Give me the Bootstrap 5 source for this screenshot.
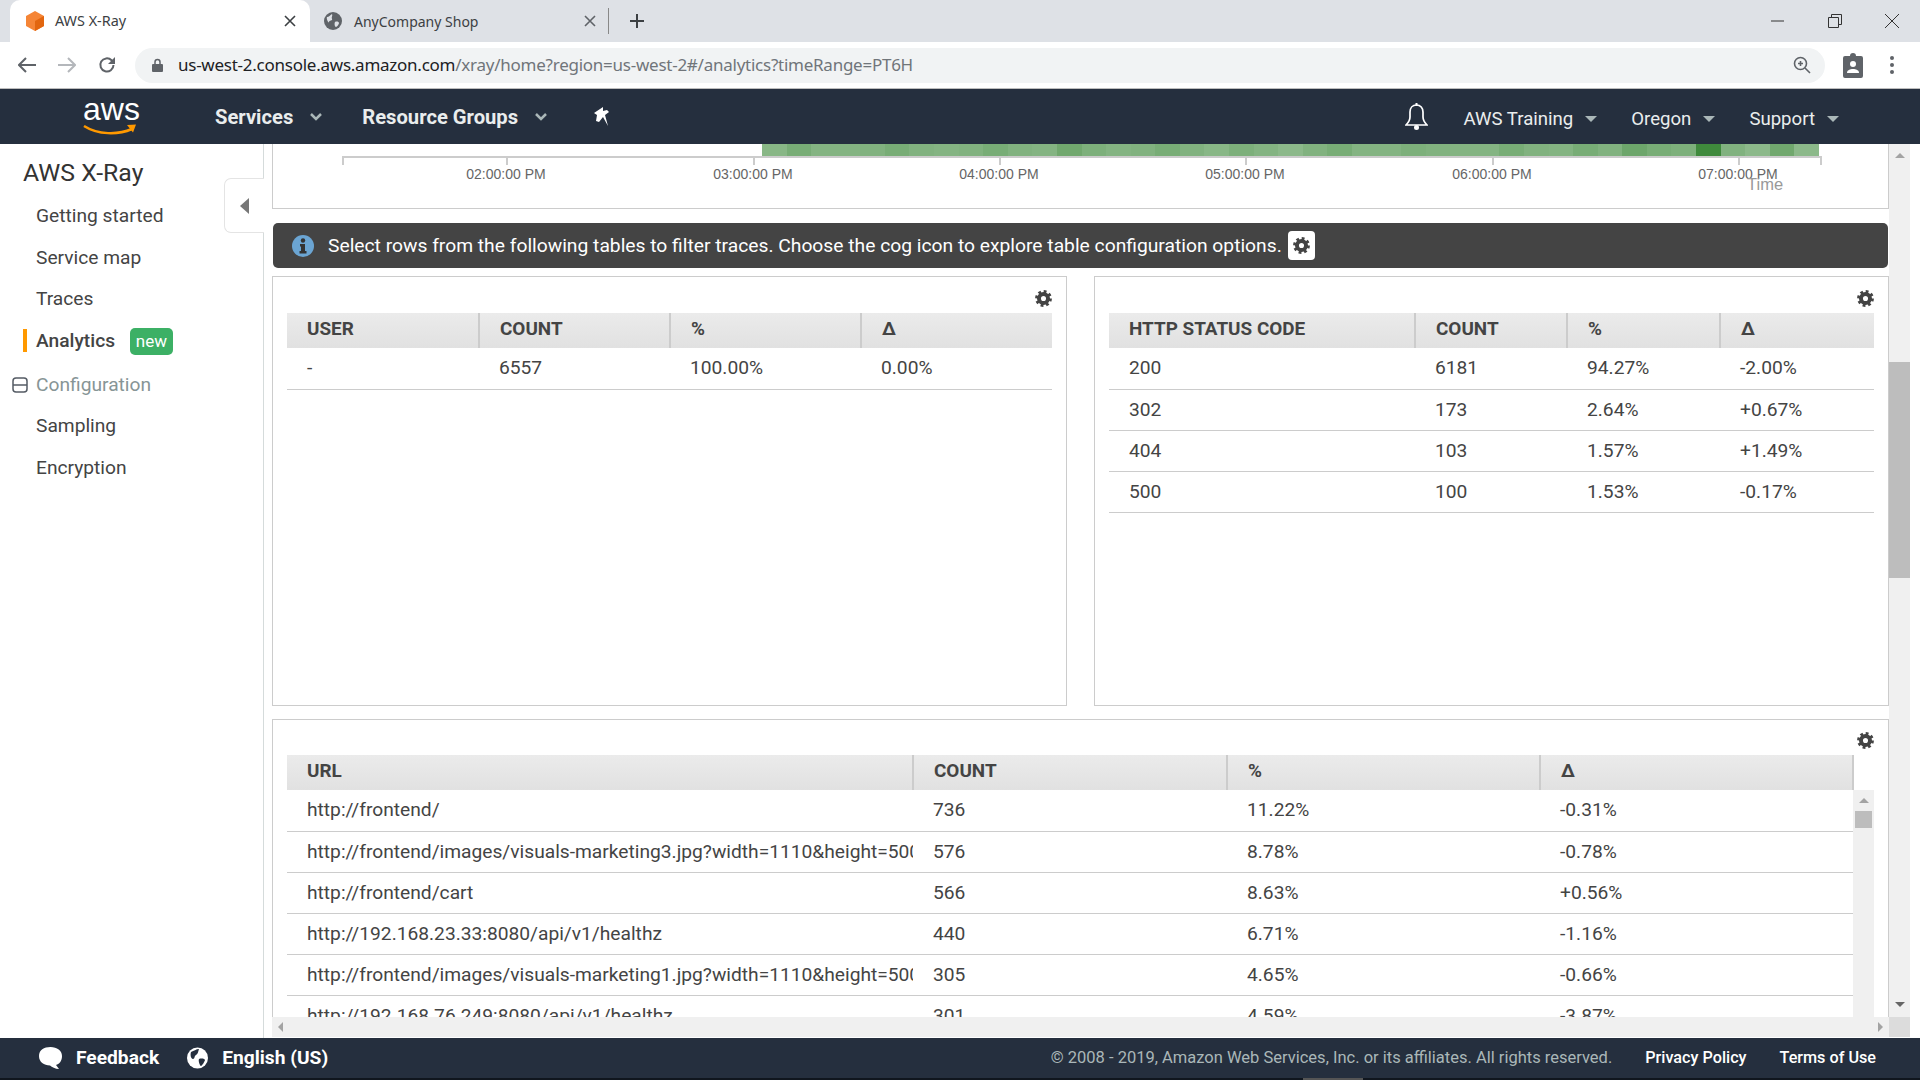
<!DOCTYPE html>
<html lang="en">
<head>
    <meta charset="utf-8">
    <title>AWS X-Ray</title>
    <link href="https://cdn.jsdelivr.net/npm/bootstrap@5.3.0/dist/css/bootstrap.min.css" rel="stylesheet">
    <style>
        html, body { height: 100%; }
        body { width: 1920px; height: 1080px; overflow: hidden; font-family: Roboto, "Liberation Sans", sans-serif; background: #fff; color: #444; }

        /* browser chrome */
        .tab-strip { height: 42px; background: #dee1e6; font-family: "Noto Sans", "Open Sans", sans-serif; font-size: 14.4px; color: #3c4043; padding-left: 10px; }
        .browser-tab { height: 42px; width: 300px; padding: 0 14px; align-self: flex-end; }
        .browser-tab.is-active { background: #fff; border-radius: 10px 10px 0 0; }
        .tab-title { flex: 1 1 auto; margin-left: 9px; }
        .tab-title.is-idle { margin-left: 12px; font-size: 14px; }
        .tab-sep { width: 1px; height: 26px; background: #888; margin-left: -2px; }
        .tab-plus { margin-left: 20px; }
        .win-btns { gap: 41px; padding-right: 20px; }
        .tool-bar { height: 47px; border-bottom: 1px solid #bdbdbd; padding: 0 26px 0 18px; }
        .tool-gap { margin-left: 22px; }
        .badge-gap { margin-left: 18px; }
        .url-box { height: 35px; width: 1690px; margin-left: 19px; border-radius: 18px; background: #f1f3f4; padding: 0 14px 0 17px; font-family: "Noto Sans", "Open Sans", sans-serif; font-size: 17px; color: #202124; }
        .url-box .url-rest { color: #70757a; }
        .url-text { margin-left: 15px; flex: 1 1 auto; letter-spacing: -.25px; }

        /* console header */
        .top-nav { height: 55px; background: #252f3e; color: #fff; padding-left: 83px; padding-right: 81px; }
        .aws-logo { width: 56px; height: 40px; margin-right: 76px; position: relative; line-height: 1; }
        .aws-word { font-family: "Liberation Sans", sans-serif; font-size: 32px; display: block; text-align: center; margin-top: -3px; line-height: 30px; }
        .nav-main { font-size: 20.2px; font-weight: 700; color: #eaeded; padding-top: 2px; }
        .nav-side { font-size: 18.6px; color: #eaeded; padding-top: 6px; }
        .caret-gray { display: inline-block; width: 0; height: 0; border-left: 6px solid transparent; border-right: 6px solid transparent; border-top: 6px solid #aab7b8; margin-left: 12px; margin-top: 4px; }
        .caret-gray.has-gap { margin-right: 34px; }
        .chev-one { margin-left: 16px; margin-right: 39px; }
        .chev-two { margin-left: 16px; margin-right: 43px; }
        .bell-gap { margin-right: 36px; }

        /* middle area */
        .middle { height: 894px; position: relative; }
        .side-menu { width: 264px; border-right: 1px solid #d5dbdb; padding: 14px 0 0 36px; flex: 0 0 auto; }
        .side-title { font-size: 24.8px; color: #333; margin: 0 0 0 -13px; line-height: 29px; height: 37px; }
        .side-link { font-size: 19.2px; height: 41.7px; line-height: 41.7px; color: #444; position: relative; }
        .side-link.is-current { font-weight: 500; }
        .side-link.is-current::before { content: ""; position: absolute; left: -13px; top: 9px; width: 4px; height: 23px; background: #f90; }
        .side-link.is-group { color: #879596; margin-top: 2px; }
        .new-tag { background: #3cb065; color: #fff; font-size: 17px; font-weight: 400; border-radius: 5px; padding: 3px 6px; line-height: 21px; margin-left: 10px; display: inline-block; }
        .group-icon { position: absolute; left: -24px; top: 13px; }
        .collapse-tab { position: absolute; left: 224px; top: 34px; width: 40px; height: 55px; background: #fff; border: 1px solid #e4e4e4; border-right: 0; border-radius: 7px 0 0 7px; }
        .tri-left { width: 0; height: 0; border-top: 8px solid transparent; border-bottom: 8px solid transparent; border-right: 9px solid #777; }

        .work-col { width: 1646px; flex: 0 0 auto; }
        .work-view { width: 1646px; height: 873px; overflow: hidden; }
        .scroll-area { width: 1625px; padding-left: 8px; flex: 0 0 auto; overflow: hidden; }
        .pane { border: 1px solid #ccc; background: #fff; }
        .chart-pane { height: 65px; border-top: 0; position: relative; }
        .heat-bar { position: absolute; left: 489px; top: 0; width: 1057px; height: 12px; }
        .heat-cell { flex: 1 1 0; background: #3f8a3c; }
        .axis-line { position: absolute; left: 69px; top: 12px; width: 1479px; height: 2px; background: #ccc; }
        .axis-tick { position: absolute; top: 12px; width: 2px; height: 9px; background: #ccc; }
        .axis-label { position: absolute; top: 21px; width: 100px; margin-left: -50px; text-align: center; font: 14px "Liberation Sans", sans-serif; color: #666; line-height: 18px; }
        .axis-name { position: absolute; left: 1474px; top: 31px; font: 16.5px "Liberation Sans", sans-serif; color: #999; line-height: 18px; }
        .info-banner { height: 45px; margin-top: 14px; background: #444; border-radius: 5px; color: #fff; font-size: 19.25px; padding-left: 19px; margin-right: 1px; margin-left: 1px; }
        .info-banner .info-text { margin-left: 14px; margin-right: 6px; padding-top: 2px; }
        .cog-chip { width: 27px; height: 29px; background: #fff; border-radius: 4px; color: #444; }
        .pane-pair { margin-top: 8px; gap: 27px; }
        .half-pane { width: 795px; height: 430px; padding: 0 14px; }
        .wide-pane { margin-top: 13px; height: 320px; padding: 0 14px; }
        .cog-row { height: 36px; padding-top: 13px; color: #444; line-height: 0; }
        .wide-pane .cog-row { height: 35px; padding-top: 12px; }

        .data-grid { table-layout: fixed; margin: 0; width: 100%; border-collapse: collapse; }
        .data-grid th { background: linear-gradient(#ebebeb, #e1e1e1); border: 0; border-right: 2px solid #ccc; font-size: 18.9px; font-weight: 700; color: #444; padding: 0 0 4px 20px; height: 35px; line-height: 30px; vertical-align: middle; box-shadow: none; }
        .data-grid th:last-child { border-right: 0; }
        .data-grid.has-edge th:last-child { border-right: 2px solid #ccc; }
        .data-grid td { font-size: 19.2px; color: #444; padding: 0 0 0 20px; height: 41px; line-height: 40px; border: 0; border-bottom: 1px solid #ccc; white-space: nowrap; overflow: hidden; box-shadow: none; }
        .col-user { width: 192px; }
        .col-num { width: 191px; }
        .col-code { width: 306px; }
        .col-mid { width: 152px; }
        .col-pct { width: 153px; }
        .col-url { width: 626px; }
        .col-cnt { width: 314px; }
        .col-share { width: 313px; }
        .head-wrap { width: 1567px; }
        .body-wrap { width: 1566px; flex: 0 0 auto; }
        .grid-scroll { width: 21px; flex: 0 0 auto; background: #f0f0f0; height: 240px; position: relative; }
        .grid-thumb { position: absolute; left: 2px; top: 21px; width: 17px; height: 17px; background: #bdbdbd; }
        .tri-up { width: 0; height: 0; border-left: 5px solid transparent; border-right: 5px solid transparent; border-bottom: 5px solid #a3a3a3; }
        .tri-down { width: 0; height: 0; border-left: 5px solid transparent; border-right: 5px solid transparent; border-top: 5px solid #666; }
        .tri-side-l { width: 0; height: 0; border-top: 5px solid transparent; border-bottom: 5px solid transparent; border-right: 5px solid #a3a3a3; }
        .tri-side-r { width: 0; height: 0; border-top: 5px solid transparent; border-bottom: 5px solid transparent; border-left: 5px solid #a3a3a3; }

        .page-scroll { width: 21px; flex: 0 0 auto; height: 873px; background: #f0f0f0; position: relative; padding: 9px 0 10px; }
        .page-thumb { position: absolute; left: 0; top: 218px; width: 21px; height: 216px; background: #bdbdbd; }
        .h-scroll { width: 1617px; margin-left: 8px; height: 20px; background: #f0f0f0; padding: 0 6px; }
        .h-corner { width: 21px; height: 20px; background: #dcdcdc; }

        /* footer */
        .foot-bar { height: 40px; background: #252f3e; color: #fff; padding: 0 44px 0 39px; font-size: 19.2px; }
        .foot-item { font-weight: 700; margin-left: 14px; padding-top: 1px; }
        .foot-globe { margin-left: 28px; }
        .foot-copy { color: #aab7b8; font-size: 16.5px; font-weight: 400; padding-top: 1px; }
        .foot-link { font-size: 16.2px; font-weight: 500; color: #fff; margin-left: 33px; padding-top: 1px; }
        .foot-edge { height: 2px; background: #10161e; position: relative; }
        .edge-mark { position: absolute; left: 1303px; top: 0; width: 60px; height: 2px; background: #555; }
    </style>
</head>
<body class="d-flex flex-column">

<svg width="0" height="0" class="d-block position-absolute">
    <symbol id="cog" viewBox="0 0 18 18">
        <circle cx="9" cy="9" r="4.8" fill="none" stroke="currentColor" stroke-width="4.2"/>
        <circle cx="9" cy="9" r="7.3" fill="none" stroke="currentColor" stroke-width="3.2" stroke-dasharray="2.9 2.83"/>
    </symbol>
</svg>

<div class="tab-strip d-flex align-items-center flex-shrink-0">
    <div class="browser-tab is-active d-flex align-items-center">
        <svg width="22" height="22" viewBox="0 0 22 22"><path d="M11 1l9 5v10l-9 5-9-5V6z" fill="#f58536"/><path d="M11 11l9-5v10l-9 5z" fill="#e2660f"/></svg>
        <span class="tab-title">AWS X-Ray</span>
        <svg width="12" height="12" viewBox="0 0 12 12"><path d="M1 1l10 10M11 1L1 11" stroke="#3c4043" stroke-width="1.6"/></svg>
    </div>
    <div class="browser-tab d-flex align-items-center">
        <svg width="18" height="18" viewBox="0 0 18 18"><circle cx="9" cy="9" r="9" fill="#5f6368"/><path d="M3 5c2 0 3-2 5-3 1 2-1 3 0 5s-3 1-3 3-3-3-2-5zM11 10c2-1 4 0 4 1s-2 4-3 4-2-3-1-5z" fill="#dee1e6"/></svg>
        <span class="tab-title is-idle">AnyCompany Shop</span>
        <svg width="12" height="12" viewBox="0 0 12 12"><path d="M1 1l10 10M11 1L1 11" stroke="#5f6368" stroke-width="1.6"/></svg>
    </div>
    <div class="tab-sep"></div>
    <svg class="tab-plus" width="16" height="16" viewBox="0 0 16 16"><path d="M8 1v14M1 8h14" stroke="#3c4043" stroke-width="2"/></svg>
    <div class="win-btns d-flex align-items-center ms-auto">
        <svg width="16" height="16" viewBox="0 0 16 16"><path d="M1 8h13" stroke="#333" stroke-width="1"/></svg>
        <svg width="16" height="16" viewBox="0 0 16 16"><path d="M1.5 4.5h10v10h-10zM4.5 4.5v-3h10v10h-3" fill="none" stroke="#333"/></svg>
        <svg width="16" height="16" viewBox="0 0 16 16"><path d="M1 1l14 14M15 1L1 15" stroke="#333"/></svg>
    </div>
</div>

<div class="tool-bar d-flex align-items-center flex-shrink-0">
    <svg width="18" height="16" viewBox="0 0 18 16"><path d="M8 1L1 8l7 7M1 8h17" fill="none" stroke="#5f6368" stroke-width="2"/></svg>
    <svg class="tool-gap" width="18" height="16" viewBox="0 0 18 16"><path d="M10 1l7 7-7 7M17 8H0" fill="none" stroke="#b4b7bb" stroke-width="2"/></svg>
    <svg class="tool-gap" width="18" height="18" viewBox="0 0 18 18"><path d="M15.5 9A6.6 6.6 0 1 1 13.6 4.3L16 6.6" fill="none" stroke="#5f6368" stroke-width="2"/><path d="M17 1v7h-7z" fill="#5f6368"/></svg>
    <div class="url-box d-flex align-items-center">
        <svg width="11" height="14" viewBox="0 0 11 14"><path d="M1 6h9a1 1 0 0 1 1 1v6a1 1 0 0 1-1 1H1a1 1 0 0 1-1-1V7a1 1 0 0 1 1-1z" fill="#5f6368"/><path d="M3 6V4a2.500 2.500 0 0 1 5 0v2" fill="none" stroke="#5f6368" stroke-width="1.500"/></svg>
        <span class="url-text">us-west-2.console.aws.amazon.com<span class="url-rest">/xray/home?region=us-west-2#/analytics?timeRange=PT6H</span></span>
        <svg width="18" height="18" viewBox="0 0 18 18"><circle cx="7.500" cy="7.500" r="6" fill="none" stroke="#5f6368" stroke-width="1.600"/><path d="M12 12l5 5M7.500 5v5M5 7.500h5" stroke="#5f6368" stroke-width="1.600"/></svg>
    </div>
    <svg class="badge-gap" width="20" height="25" viewBox="0 0 20 25"><path d="M2 3h5a3 3 0 0 1 6 0h5a2 2 0 0 1 2 2v18a2 2 0 0 1-2 2H2a2 2 0 0 1-2-2V5a2 2 0 0 1 2-2z" fill="#5f6368"/><circle cx="10" cy="11" r="3" fill="#fff"/><path d="M4 20c0-3 3-4 6-4s6 1 6 4z" fill="#fff"/></svg>
    <svg class="ms-auto" width="4" height="18" viewBox="0 0 4 18"><circle cx="2" cy="2" r="2" fill="#5f6368"/><circle cx="2" cy="9" r="2" fill="#5f6368"/><circle cx="2" cy="16" r="2" fill="#5f6368"/></svg>
</div>

<nav class="top-nav d-flex align-items-center flex-shrink-0">
    <div class="aws-logo">
        <span class="aws-word">aws</span>
        <svg class="d-block" width="56" height="12" viewBox="0 0 56 12"><path d="M1 2c14 9 34 9 48 3" fill="none" stroke="#f90" stroke-width="2.500"/><path d="M44 1l9-.5-3 8z" fill="#f90"/></svg>
    </div>
    <span class="nav-main">Services</span>
    <svg class="chev-one" width="14" height="8" viewBox="0 0 14 8"><path d="M2 1l5 5 5-5" fill="none" stroke="#aab7b8" stroke-width="2.500"/></svg>
    <span class="nav-main">Resource Groups</span>
    <svg class="chev-two" width="14" height="8" viewBox="0 0 14 8"><path d="M2 1l5 5 5-5" fill="none" stroke="#aab7b8" stroke-width="2.500"/></svg>
    <svg width="18" height="20" viewBox="0 0 18 20"><path transform="matrix(-1 0 0 1 18 0)" d="M6 0l9 6-3 2 1 6-3 1-4-5-5 9 3-11-4-3 2-2 4 1z" fill="#fff"/></svg>
    <svg class="ms-auto bell-gap" width="23" height="28" viewBox="0 0 23 28"><path d="M11.500 2c-4 0-6.500 3-6.500 7v5c0 3-2 6-4 8h21c-2-2-4-5-4-8V9c0-4-2.500-7-6.500-7z" fill="none" stroke="#fff" stroke-width="1.700"/><circle cx="11.500" cy="24.500" r="2.500" fill="#fff"/><rect x="10.500" y="0" width="2" height="3" fill="#fff"/></svg>
    <span class="nav-side">AWS Training</span>
    <span class="caret-gray has-gap"></span>
    <span class="nav-side">Oregon</span>
    <span class="caret-gray has-gap"></span>
    <span class="nav-side">Support</span>
    <span class="caret-gray"></span>
</nav>

<div class="middle d-flex flex-shrink-0">
    <aside class="side-menu">
        <h1 class="side-title fw-normal">AWS X-Ray</h1>
        <div class="side-link">Getting started</div>
        <div class="side-link">Service map</div>
        <div class="side-link">Traces</div>
        <div class="side-link is-current">Analytics <span class="new-tag">new</span></div>
        <div class="side-link is-group">
            <svg class="group-icon" width="16" height="16" viewBox="0 0 16 16"><rect x="1" y="1" width="14" height="14" rx="3" fill="none" stroke="#545b64" stroke-width="1.500"/><path d="M1 8h14" stroke="#545b64" stroke-width="1.500"/></svg>
            Configuration
        </div>
        <div class="side-link">Sampling</div>
        <div class="side-link">Encryption</div>
    </aside>
    <div class="collapse-tab d-flex align-items-center justify-content-center"><div class="tri-left"></div></div>

    <div class="work-col">
        <div class="work-view d-flex">
            <div class="scroll-area">
                <div class="pane chart-pane">
                    <div class="axis-line"></div>
                    <div class="heat-bar d-flex" id="heat"></div>
                    <div class="axis-tick" style="left:69px"></div>
                    <div class="axis-tick" style="left:1547px"></div>
                    <div class="axis-tick" style="left:233px"></div><div class="axis-label" style="left:233px">02:00:00 PM</div>
                    <div class="axis-tick" style="left:480px"></div><div class="axis-label" style="left:480px">03:00:00 PM</div>
                    <div class="axis-tick" style="left:726px"></div><div class="axis-label" style="left:726px">04:00:00 PM</div>
                    <div class="axis-tick" style="left:972px"></div><div class="axis-label" style="left:972px">05:00:00 PM</div>
                    <div class="axis-tick" style="left:1219px"></div><div class="axis-label" style="left:1219px">06:00:00 PM</div>
                    <div class="axis-tick" style="left:1465px"></div><div class="axis-label" style="left:1465px">07:00:00 PM</div>
                    <div class="axis-name">Time</div>
                </div>

                <div class="info-banner d-flex align-items-center">
                    <svg width="22" height="22" viewBox="0 0 22 22"><circle cx="11" cy="11" r="11" fill="#6ba5d3"/><circle cx="11" cy="5.500" r="2.200" fill="#333"/><path d="M8 9h5v7h1.500v2.500h-7V16H9v-4.500H8z" fill="#333"/></svg>
                    <span class="info-text">Select rows from the following tables to filter traces. Choose the cog icon to explore table configuration options.</span>
                    <span class="cog-chip d-flex align-items-center justify-content-center"><svg width="17" height="17"><use href="#cog"/></svg></span>
                </div>

                <div class="pane-pair d-flex">
                    <div class="pane half-pane">
                        <div class="cog-row text-end"><svg width="17" height="17"><use href="#cog"/></svg></div>
                        <table class="table data-grid">
                            <colgroup><col class="col-user"><col class="col-num"><col class="col-num"><col></colgroup>
                            <thead><tr><th>USER</th><th>COUNT</th><th>%</th><th>Δ</th></tr></thead>
                            <tbody>
                                <tr><td>-</td><td>6557</td><td>100.00%</td><td>0.00%</td></tr>
                            </tbody>
                        </table>
                    </div>
                    <div class="pane half-pane">
                        <div class="cog-row text-end"><svg width="17" height="17"><use href="#cog"/></svg></div>
                        <table class="table data-grid">
                            <colgroup><col class="col-code"><col class="col-mid"><col class="col-pct"><col></colgroup>
                            <thead><tr><th>HTTP STATUS CODE</th><th>COUNT</th><th>%</th><th>Δ</th></tr></thead>
                            <tbody>
                                <tr><td>200</td><td>6181</td><td>94.27%</td><td>-2.00%</td></tr>
                                <tr><td>302</td><td>173</td><td>2.64%</td><td>+0.67%</td></tr>
                                <tr><td>404</td><td>103</td><td>1.57%</td><td>+1.49%</td></tr>
                                <tr><td>500</td><td>100</td><td>1.53%</td><td>-0.17%</td></tr>
                            </tbody>
                        </table>
                    </div>
                </div>

                <div class="pane wide-pane">
                    <div class="cog-row text-end"><svg width="17" height="17"><use href="#cog"/></svg></div>
                    <div class="head-wrap">
                        <table class="table data-grid has-edge">
                            <colgroup><col class="col-url"><col class="col-cnt"><col class="col-share"><col></colgroup>
                            <thead><tr><th>URL</th><th>COUNT</th><th>%</th><th>Δ</th></tr></thead>
                        </table>
                    </div>
                    <div class="d-flex">
                        <div class="body-wrap">
                            <table class="table data-grid">
                                <colgroup><col class="col-url"><col class="col-cnt"><col class="col-share"><col></colgroup>
                                <tbody>
                                    <tr><td>http://frontend/</td><td>736</td><td>11.22%</td><td>-0.31%</td></tr>
                                    <tr><td>http://frontend/images/visuals-marketing3.jpg?width=1110&amp;height=500</td><td>576</td><td>8.78%</td><td>-0.78%</td></tr>
                                    <tr><td>http://frontend/cart</td><td>566</td><td>8.63%</td><td>+0.56%</td></tr>
                                    <tr><td>http://192.168.23.33:8080/api/v1/healthz</td><td>440</td><td>6.71%</td><td>-1.16%</td></tr>
                                    <tr><td>http://frontend/images/visuals-marketing1.jpg?width=1110&amp;height=500</td><td>305</td><td>4.65%</td><td>-0.66%</td></tr>
                                    <tr><td>http://192.168.76.249:8080/api/v1/healthz</td><td>301</td><td>4.59%</td><td>-3.87%</td></tr>
                                </tbody>
                            </table>
                        </div>
                        <div class="grid-scroll d-flex justify-content-center pt-2">
                            <div class="tri-up"></div>
                            <div class="grid-thumb"></div>
                        </div>
                    </div>
                </div>
            </div>
            <div class="page-scroll d-flex flex-column align-items-center justify-content-between">
                <div class="tri-up"></div>
                <div class="page-thumb"></div>
                <div class="tri-down"></div>
            </div>
        </div>
        <div class="d-flex">
            <div class="h-scroll d-flex align-items-center justify-content-between">
                <div class="tri-side-l"></div>
                <div class="tri-side-r"></div>
            </div>
            <div class="h-corner"></div>
        </div>
    </div>
</div>

<footer class="foot-bar d-flex align-items-center flex-shrink-0">
    <svg width="23" height="24" viewBox="0 0 23 24"><path d="M11.500 1C18 1 23 4.500 23 10s-3 8-6 9l3 4c-4 0-7-2-9-3.500C5 19.500 0 16 0 10S5 1 11.500 1z" fill="#fff"/></svg>
    <span class="foot-item">Feedback</span>
    <svg class="foot-globe" width="21" height="22" viewBox="0 0 21 22"><circle cx="10.500" cy="11" r="10.500" fill="#fff"/><path d="M4 5c3-1 5-3 8-3-1 3-1 5-3 6s-1 4-3 4-3-4-2-7zM12 12c3-1 6 0 6 1s-3 6-4 6-3-5-2-7z" fill="#252f3e"/></svg>
    <span class="foot-item">English (US)</span>
    <span class="foot-copy ms-auto">© 2008 - 2019, Amazon Web Services, Inc. or its affiliates. All rights reserved.</span>
    <span class="foot-link">Privacy Policy</span>
    <span class="foot-link">Terms of Use</span>
</footer>
<div class="foot-edge flex-shrink-0"><div class="edge-mark"></div></div>

<script>
    // heat strip cells, one per time bucket
    const levels = [.62,.7,.64,.64,.66,.7,.66,.64,.66,.7,.66,.64,.74,.68,.64,.66,.7,.66,.62,.68,.64,.6,.66,.7,.64,.64,.68,.66,.64,.64,.7,.66,.64,.7,.66,.76,.7,.68,1,.66,.6,.74,.6];
    const heat = document.getElementById('heat');
    levels.forEach(function (a) {
        const c = document.createElement('div');
        c.className = 'heat-cell';
        c.style.opacity = a;
        heat.appendChild(c);
    });
</script>
<script src="https://cdn.jsdelivr.net/npm/bootstrap@5.3.0/dist/js/bootstrap.bundle.min.js"></script>
</body>
</html>
